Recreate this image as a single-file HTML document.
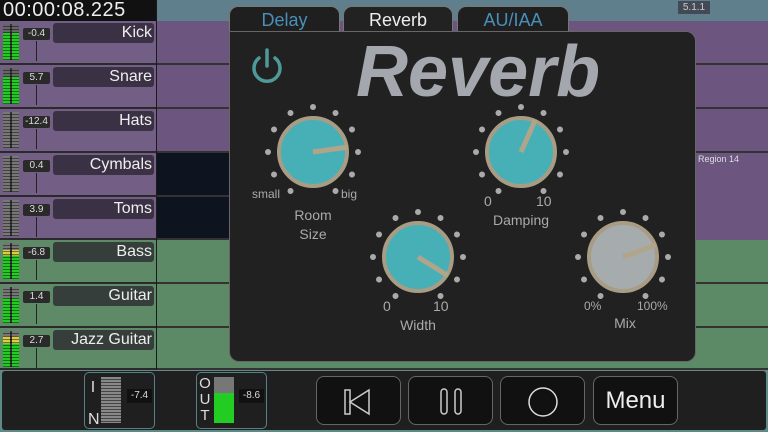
<!DOCTYPE html>
<html><head><meta charset="utf-8"><style>
*{margin:0;padding:0;box-sizing:border-box}
body{width:768px;height:432px;overflow:hidden;background:#1a1a1a;font-family:"Liberation Sans","DejaVu Sans",sans-serif;position:relative}
.abs{position:absolute}
.time{left:0;top:0;width:156px;height:21px;background:#111;color:#eee;font-size:20px;line-height:21px;padding-left:3px;letter-spacing:0.5px}
.ruler{left:157px;top:0;width:611px;height:21px;background:#5f7f8c}
.trk{position:absolute;left:0;width:156px;border-bottom:2px solid #2a2a2a}
.trk .meter{position:absolute;left:3px;top:3px;width:16px;height:36px;background:#777}
.trk .meter:after{content:"";position:absolute;inset:0;background:repeating-linear-gradient(transparent 0 2px,rgba(0,0,0,.45) 2px 3px),linear-gradient(90deg,transparent 0 7px,#333 7px 9px,transparent 9px)}
.trk .val{position:absolute;left:23px;top:7px;width:27px;height:12px;background:#2a2a2a;color:#ddd;font-size:10px;text-align:center;line-height:12px;border-radius:2px}
.trk .fad{position:absolute;left:36px;top:20px;width:1px;height:20px;background:#222}
.trk .name{position:absolute;left:53px;top:2px;width:101px;height:20px;border-radius:3px;background:rgba(35,30,40,.7);color:#eee;font-size:16px;text-align:right;padding-right:2px;line-height:20px}
.lane{position:absolute;left:157px;width:611px;border-bottom:2px solid #333}
.tab{position:absolute;top:6px;height:26px;background:#1f1f1f;border:1px solid #777;border-bottom:none;border-radius:9px 9px 0 0;font-size:18px;text-align:center;line-height:26px;color:#4a8fb8}
.btn{position:absolute;top:376px;width:85px;height:49px;border:1px solid #666;border-radius:8px;background:#111}
.lbl{position:absolute;color:#aaa;font-size:14px;text-align:center}
</style></head><body>
<div class="abs time">00:00:08.225</div>
<div class="abs ruler"></div>
<div class="abs" style="left:678px;top:1px;width:32px;height:13px;background:#444a55;color:#ccc;font-size:10px;text-align:center;line-height:13px">5.1.1</div>

<div class="lane" style="top:21px;height:44px;background:#6c5680"></div>
<div class="lane" style="top:65px;height:44px;background:#6c5680"></div>
<div class="lane" style="top:109px;height:44px;background:#6c5680"></div>
<div class="lane" style="top:153px;height:44px;background:#0d1420"></div>
<div class="abs" style="left:696px;top:153px;width:72px;height:44px;background:#6c5680"></div>
<div class="abs" style="left:698px;top:154px;color:#ddd;font-size:9px">Region 14</div>
<div class="lane" style="top:197px;height:43px;background:#0d1420"></div>
<div class="abs" style="left:696px;top:197px;width:72px;height:43px;background:#6c5680"></div>
<div class="lane" style="top:240px;height:44px;background:#5c8a66"></div>
<div class="lane" style="top:284px;height:44px;background:#5c8a66"></div>
<div class="lane" style="top:328px;height:42px;background:#5c8a66"></div>

<div class="trk" style="top:21px;height:44px;background:#735f85"><div class="meter" style="background:linear-gradient(#666 0 25%,#2c2 25%)"></div><div class="val">-0.4</div><div class="fad"></div><div class="name">Kick</div></div>
<div class="trk" style="top:65px;height:44px;background:#735f85"><div class="meter" style="background:linear-gradient(#666 0 25%,#2c2 25%)"></div><div class="val">5.7</div><div class="fad"></div><div class="name">Snare</div></div>
<div class="trk" style="top:109px;height:44px;background:#735f85"><div class="meter"></div><div class="val">-12.4</div><div class="fad"></div><div class="name">Hats</div></div>
<div class="trk" style="top:153px;height:44px;background:#735f85"><div class="meter"></div><div class="val">0.4</div><div class="fad"></div><div class="name">Cymbals</div></div>
<div class="trk" style="top:197px;height:43px;background:#735f85"><div class="meter"></div><div class="val">3.9</div><div class="fad"></div><div class="name">Toms</div></div>
<div class="trk" style="top:240px;height:44px;background:#5f8a68"><div class="meter" style="background:linear-gradient(#777 0 20%,#dc4 20% 35%,#2c2 35%)"></div><div class="val">-6.8</div><div class="fad"></div><div class="name">Bass</div></div>
<div class="trk" style="top:284px;height:44px;background:#5f8a68"><div class="meter" style="background:linear-gradient(#777 0 30%,#2c2 30%)"></div><div class="val">1.4</div><div class="fad"></div><div class="name">Guitar</div></div>
<div class="trk" style="top:328px;height:42px;background:#5f8a68"><div class="meter" style="background:linear-gradient(#777 0 15%,#dc4 15% 35%,#2c2 35%)"></div><div class="val">2.7</div><div class="fad"></div><div class="name">Jazz Guitar</div></div>

<div class="tab" style="left:229px;width:111px">Delay</div>
<div class="tab" style="left:343px;width:110px;color:#eee;height:28px;background:#222">Reverb</div>
<div class="tab" style="left:457px;width:112px">AU/IAA</div>

<div class="abs" style="left:229px;top:31px;width:467px;height:331px;background:#212121;border:1px solid #666;border-radius:0 10px 10px 10px"></div>
<div class="abs" style="left:356px;top:32px;font-size:72px;font-style:italic;font-weight:bold;color:#a4a8ae;line-height:80px">Reverb</div>

<svg class="abs" style="left:0;top:0" width="768" height="432">
<g fill="none" stroke="#4d9a9a" stroke-width="3.5" stroke-linecap="round">
<path d="M259 58 A13 13 0 1 0 275 58"/><line x1="267" y1="50" x2="267" y2="66"/></g>
<defs>
<g id="dots" fill="#aaa">
<circle r="3" transform="rotate(-150) translate(0,-45)"/><circle r="3" transform="rotate(-120) translate(0,-45)"/><circle r="3" transform="rotate(-90) translate(0,-45)"/><circle r="3" transform="rotate(-60) translate(0,-45)"/><circle r="3" transform="rotate(-30) translate(0,-45)"/><circle r="3" transform="rotate(0) translate(0,-45)"/><circle r="3" transform="rotate(30) translate(0,-45)"/><circle r="3" transform="rotate(60) translate(0,-45)"/><circle r="3" transform="rotate(90) translate(0,-45)"/><circle r="3" transform="rotate(120) translate(0,-45)"/><circle r="3" transform="rotate(150) translate(0,-45)"/>
</g></defs>
<g transform="translate(313,152)"><use href="#dots"/><circle r="34" fill="#47b0b6" stroke="#a89c84" stroke-width="4"/><line x1="0" y1="0" x2="0" y2="-35" stroke="#b0a48a" stroke-width="5" transform="rotate(82)"/></g>
<g transform="translate(521,152)"><use href="#dots"/><circle r="34" fill="#47b0b6" stroke="#a89c84" stroke-width="4"/><line x1="0" y1="0" x2="0" y2="-35" stroke="#b0a48a" stroke-width="5" transform="rotate(24)"/></g>
<g transform="translate(418,257)"><use href="#dots"/><circle r="34" fill="#47b0b6" stroke="#a89c84" stroke-width="4"/><line x1="0" y1="0" x2="0" y2="-35" stroke="#b0a48a" stroke-width="5" transform="rotate(122)"/></g>
<g transform="translate(623,257)"><use href="#dots"/><circle r="34" fill="#a6acae" stroke="#a89c84" stroke-width="4"/><line x1="0" y1="0" x2="0" y2="-35" stroke="#b0a48a" stroke-width="5" transform="rotate(70)"/></g>
</svg>
<div class="lbl" style="left:252px;top:187px;font-size:12px">small</div>
<div class="lbl" style="left:341px;top:187px;font-size:12px">big</div>
<div class="lbl" style="left:283px;top:206px;width:60px;line-height:19px">Room<br>Size</div>
<div class="lbl" style="left:484px;top:193px">0</div>
<div class="lbl" style="left:536px;top:193px">10</div>
<div class="lbl" style="left:481px;top:212px;width:80px">Damping</div>
<div class="lbl" style="left:383px;top:298px">0</div>
<div class="lbl" style="left:433px;top:298px">10</div>
<div class="lbl" style="left:388px;top:317px;width:60px">Width</div>
<div class="lbl" style="left:584px;top:299px;font-size:12px">0%</div>
<div class="lbl" style="left:637px;top:299px;font-size:12px">100%</div>
<div class="lbl" style="left:600px;top:315px;width:50px">Mix</div>

<div class="abs" style="left:0;top:370px;width:768px;height:62px;background:#5c8a84"></div>
<div class="abs" style="left:2px;top:371px;width:764px;height:59px;background:#1f1f1f;border-radius:3px"></div>
<div class="abs" style="left:84px;top:372px;width:71px;height:57px;border:1px solid #5a7f88;border-radius:5px"></div>
<div class="abs" style="left:88px;top:380px;color:#ddd;font-size:16px;line-height:16px;width:10px;text-align:center">I<br><br>N</div>
<div class="abs" style="left:101px;top:377px;width:20px;height:46px;background:repeating-linear-gradient(#888 0 2px,#444 2px 3px)"></div>
<div class="abs" style="left:127px;top:389px;width:25px;height:14px;background:#111;color:#ddd;font-size:10px;text-align:center;line-height:14px">-7.4</div>
<div class="abs" style="left:196px;top:372px;width:71px;height:57px;border:1px solid #5a7f88;border-radius:5px"></div>
<div class="abs" style="left:199px;top:376px;color:#ddd;font-size:15px;line-height:16px;width:12px;text-align:center">O<br>U<br>T</div>
<div class="abs" style="left:214px;top:377px;width:20px;height:46px;background:linear-gradient(#777 0 35%,#2c2 35%)"></div>
<div class="abs" style="left:239px;top:389px;width:25px;height:14px;background:#111;color:#ddd;font-size:10px;text-align:center;line-height:14px">-8.6</div>

<div class="btn" style="left:316px"><svg width="85" height="49"><g fill="none" stroke="#ccc" stroke-width="1.5"><rect x="28" y="13" width="5" height="24"/><path d="M33 25 L52 13 L52 37 Z"/></g></svg></div>
<div class="btn" style="left:408px"><svg width="85" height="49"><g fill="none" stroke="#ccc" stroke-width="1.5"><rect x="32" y="12" width="6" height="25" rx="3"/><rect x="46" y="12" width="6" height="25" rx="3"/></g></svg></div>
<div class="btn" style="left:500px"><svg width="85" height="49"><circle cx="42" cy="25" r="14" fill="none" stroke="#ddd" stroke-width="1.5"/></svg></div>
<div class="btn" style="left:593px;color:#eee;font-size:24px;text-align:center;line-height:47px">Menu</div>
</body></html>
